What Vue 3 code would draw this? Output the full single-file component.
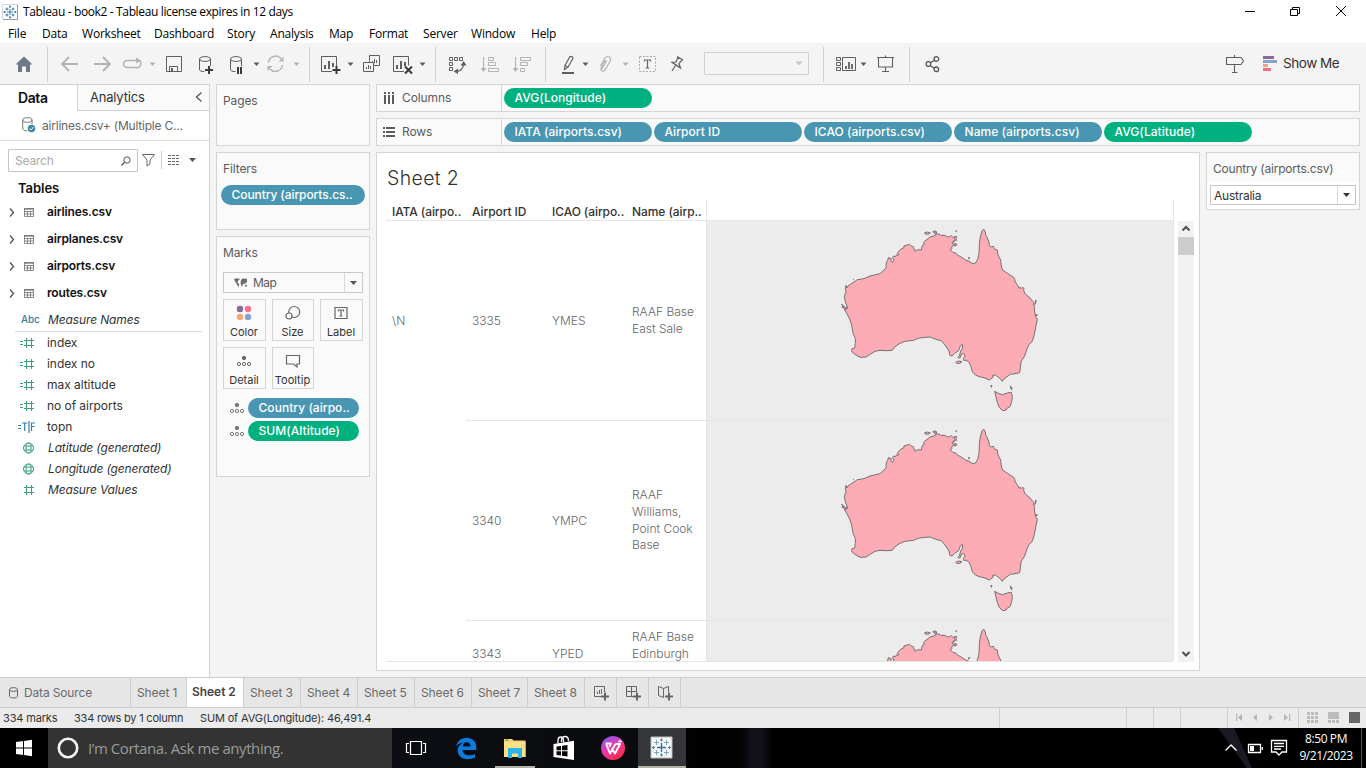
<script setup>
const D = '#5f5f5f'
const G = '#b3b3b3'
const caret = (x, y, c = D) => `<path d="M${x - 3} ${y - 1.5}h6l-3 3.5z" fill="${c}"/>`
const plus = (x, y, c = '#3a3a3a') => `<path d="M${x - 4} ${y}h8M${x} ${y - 4}v8" stroke="${c}" stroke-width="2"/>`
const line = (d, c = D, w = 1) => `<path d="${d}" fill="none" stroke="${c}" stroke-width="${w}"/>`
const cyl = (x) =>
  line(`M${x} 59v11q.5 1.500 5 1.700M${x + 11} 59v7M${x} 59a5.500 2.400 0 0 1 11 0a5.500 2.400 0 0 1 -11 0z`)

const tools = [
  { x: 0, w: 47, d: `<path d="M24 56.500l8.500 8h-2.500v7.500h-4v-5.500h-4v5.500h-4v-7.500h-2.500z" fill="#6c7887"/>` },
  { sep: true },
  { x: 48, w: 40, d: line('M78 64H63M69 57l-7 7 7 7', G, 1.8) },
  { x: 88, w: 30, d: line('M94 64H109M103 57l7 7 -7 7', G, 1.8) },
  { x: 118, w: 42, d: line('M139 60.500q2.500 1 1.500 4.500t-4 2.500H127.500q-4 -.5 -4 -3.500t4 -3.500H137', G, 1.4) + `<path d="M136 57.500l5 3 -5 3z" fill="${G}"/>` + caret(152.5, 64, G) },
  { x: 160, w: 30, d: line('M166.500 56.500h15v15h-15zM169.500 71.500v-5h8v5') + `<path d="M171 68h2v3h-2z" fill="${D}"/>` },
  { x: 190, w: 32, d: cyl(199.5) + plus(209, 70) },
  { x: 222, w: 43, d: cyl(230.5) + `<path d="M237 67h2v7h-2zM240 67h2v7h-2z" fill="#3a3a3a"/>` + caret(256.5, 64) },
  { x: 265, w: 44, d: line('M268.500 62.500a7.200 7.200 0 0 1 12.500 -4M282.500 65a7.200 7.200 0 0 1 -12.500 4', G, 1.4) + `<path d="M278.500 61.500h5v-5zM272.500 66h-5v5z" fill="${G}"/>` + caret(296.500, 64, G) },
  { sep: true },
  { x: 310, w: 50, d: line('M332 71.500h-10.500v-15h15v9.500') + line('M325 69v-4M329 69v-8M333 67v-4', D, 2) + plus(336.500, 70) + caret(350.5, 64) },
  { x: 360, w: 26, d: line('M369.500 60.500v-5h10v10h-6M373.500 71.500h-10v-9h10zM369.500 60.500v2') + line('M372.500 63v-2M374.500 63v-4M376.500 63v-3M366.500 69v-2M368.500 69v-4M370.500 69v-3') },
  { x: 386, w: 49, d: line('M404 71.500h-10.500v-15h15v9') + line('M397 69v-4M401 69v-8M405 66v-4', D, 2) + line('M405 66.500l7 7M412 66.500l-7 7', '#3a3a3a', 2) + caret(422.5, 64) },
  { sep: true },
  { x: 436, w: 36, d: line('M449.500 57.500h3v3h-3zM454.500 57.500h3v3h-3zM459.500 57.500h3v3h-3zM449.500 62.500h3v3h-3zM449.500 67.500h3v3h-3z') + line('M463.500 64q-.5 6.500 -7 7.500', D, 1.3) + `<path d="M460.500 65.500l3.200 -4.500 2.800 4.500zM458 68.500l-4.500 3 4.500 2.500z" fill="${D}"/>` },
  { x: 472, w: 34, d: line('M483.500 57v13', G, 1.2) + `<path d="M480.500 68h6l-3 4z" fill="${G}"/>` + line('M488.500 57.500h5v3h-5zM488.500 62.500h7v3h-7zM488.500 68.500h10v3h-10z', G) },
  { x: 506, w: 39, d: line('M515.500 57v13', G, 1.2) + `<path d="M512.500 68h6l-3 4z" fill="${G}"/>` + line('M520.500 57.500h10v3h-10zM520.500 62.500h7v3h-7zM520.500 68.500h4v3h-4z', G) },
  { sep: true },
  { x: 546, w: 46, d: line('M564.500 69.500l.5 -4 5 -9q2.500 -.5 3 1.700l-5 9zM565 65.500l3.500 2', D, 1.2) + `<path d="M562 72h12v2h-12z" fill="${D}"/>` + caret(585.500, 64) },
  { x: 592, w: 42, d: line('M602 69l4.500 -8.500M600.500 66l4 -7.500q2.500 -3 5 -1.500 1.800 1.500 .5 4.500l-5 8.500q-1.500 1.800 -3.300 .8 -1.500 -1.200 -.5 -3.300l4.300 -7.500', G, 1.2) + caret(625.500, 64, G) },
  { x: 634, w: 28, d: '<path d="M639.500 56.500h16v15h-16z" fill="none" stroke="#aaa" stroke-dasharray="2 1.500"/>' + line('M644.500 61.500v-1.500h6v1.500M647.500 60v8M645.500 68h4', '#666', 1.2) },
  { x: 662, w: 42, d: line('M677 56.500l6 3.500M678 57.500l-2 4.500 -4 .5 8.500 5.500 -1.500 -4.500 3 -3.700M671.500 62l9.500 6M675.500 65.500l-3.500 5.500', D, 1.2) },
  { combo: true },
  { gap: 14 },
  { sep: true },
  { x: 824, w: 44, d: line('M836.500 57.500h4v3h-4zM836.500 62.500h4v3h-4zM836.500 67.500h4v3h-4zM842.500 57.500h13v13h-13z') + line('M846 69v-3M849 69v-7M852 69v-5', D, 1.8) + caret(863.500, 64) },
  { x: 868, w: 41, d: line('M877 57.500h17M878.500 57.500v9.500h14v-9.500M885.500 67v5M882 71.500h7M885.500 55.500v2', D, 1.1) },
  { sep: true },
  { x: 910, w: 310, d: line('M930 63l4 -2.500M930 65.500l4 2.500M930.700 64a2.300 2.300 0 1 1 -4.600 0a2.300 2.300 0 1 1 4.600 0zM938.700 59a2.300 2.300 0 1 1 -4.600 0a2.300 2.300 0 1 1 4.600 0zM938.700 69.300a2.300 2.300 0 1 1 -4.600 0a2.300 2.300 0 1 1 4.600 0z', '#555', 1.3) },
  { x: 1220, w: 43, d: line('M1226.500 57.500h14.500l2.500 3.500 -2.500 3.500h-14.500zM1234.500 55v2.500M1234.500 64.500v8M1232 72.500h5.500', D, 1.1) },
  { x: 1263, w: 20, d: '<path d="M1263 56h11v3h-11z" fill="#8b6d98"/><path d="M1263 60h14v3h-14z" fill="#84a3cf"/><path d="M1263 64h5v3h-5z" fill="#f3a57e"/><path d="M1263 68h8v3h-8z" fill="#f76f84"/>' }
]

const menus = [['File', 34], ['Data', 40], ['Worksheet', 72], ['Dashboard', 73], ['Story', 43], ['Analysis', 59], ['Map', 40], ['Format', 54], ['Server', 48], ['Window', 60], ['Help', 40]]
const tables = ['airlines.csv', 'airplanes.csv', 'airports.csv', 'routes.csv']
const fields = [
  ['calc', 'index'], ['calc', 'index no'], ['calc', 'max altitude'], ['calc', 'no of airports'], ['bool', 'topn'],
  ['geo', 'Latitude (generated)'], ['geo', 'Longitude (generated)'], ['num', 'Measure Values']
]
const rowPills = ['IATA (airports.csv)', 'Airport ID', 'ICAO (airports.csv)', 'Name (airports.csv)']
const sheets = [1, 2, 3, 4, 5, 6, 7, 8]
const rows = [
  { iata: '\\N', id: '3335', icao: 'YMES', name: ['RAAF Base', 'East Sale'] },
  { iata: '', id: '3340', icao: 'YMPC', name: ['RAAF', 'Williams,', 'Point Cook', 'Base'] },
  { iata: '', id: '3343', icao: 'YPED', name: ['RAAF Base', 'Edinburgh'] }
]
const land = 'M318 38L320 43 328 42 332 46 345 46 350 50 360 51 364 46 368 50 372 55 374 49 380 50 378 56 380 61 372 60 373 66 366 66 368 71 372 75 365 80 366 86 360 89 368 97 377 99 382 105 390 109 398 114 406 120 414 122 426 130 436 130 443 118 447 100 448 75 450 55 456 33 461 27 466 36 467 44 471 52 477 66 478 77 482 81 490 79 494 88 502 90 504 105 512 120 514 138 518 150 528 157 540 165 551 172 554 178 556 186 563 196 567 205 571 202 573 206 577 202 582 205 581 212 586 222 600 234 607 243 612 248 611 255 614 262 613 270 615 282 618 292 622 298 617 322 612 348 606 365 596 375 590 390 583 410 573 425 571 445 569 458 555 461 541 463 530 471 522 477 517 484 513 479 507 473 500 468 495 463 493 467 487 467 489 472 478 480 462 473 448 470 436 465 427 455 423 440 418 428 408 420 402 422 400 416 405 408 401 400 395 402 390 414 384 413 389 405 392 393 398 384 397 373 391 378 385 393 374 400 366 408 360 407 357 393 345 375 335 363 318 358 300 351 285 352 268 354 250 361 225 364 208 371 195 380 187 391 170 392 150 391 135 394 122 402 108 411 90 412 78 405 65 395 66 386 74 384 76 370 76 355 69 340 65 315 58 295 50 280 42 266 41 261 36 262 39 257 34 253 44 260 48 269 48 262 53 265 46 245 43 230 48 215 46 206 48 196 51 204 54 198 66 190 82 179 102 176 120 168 150 161 162 150 169 142 168 134 170 125 174 120 174 114 178 113 180 117 184 116 183 122 187 127 192 121 188 113 190 108 196 110 200 104 205 106 203 98 213 87 222 83 222 78 238 73 242 77 250 80 255 94 262 89 274 90 277 76 283 74 281 68 288 60 302 50 315 47Z'
const isles = 'M494 514L505 520 518 524 532 519 544 517 547 530 545 545 540 560 533 563 528 570 518 572 508 562 502 548 498 530ZM377 427L385 423 396 425 390 430 380 430ZM284 38L292 36 301 39 294 43 286 42ZM309 34L318 33 320 39 312 39ZM482 497L486 497 484 502ZM541 498L545 502 546 509 542 506ZM414 115L419 112 417 117ZM370 72L379 71 378 78 372 77ZM377 34L380 32 379 35ZM70 178L72 178 71 179ZM618 240L617 250 614 254ZM619 282L622 285 620 288Z'
</script>

<template>
  <div class="screen">
    <header class="titlebar">
      <svg class="logo" width="16" height="16" viewBox="0 0 16 16">
        <path d="M.5 .5h15v15H.5z" fill="#fff" stroke="#d5d5d5" /><path d="M1 15.500h14.500V1" fill="none" stroke="#999" />
        <path d="M8 5v6M5 8h6M5 3.500v3M3.500 5h3M11 3.500v3M9.500 5h3M5 9.500v3M3.500 11h3M11 9.500v3M9.500 11h3M8 1.500v2.500M7 2.500h2M8 12v2.500M7 13.500h2M2.500 7v2M1.500 8H4M13.500 7v2M12 8h2.500" stroke="#3a7fa8" />
      </svg>
      <span class="caption">Tableau - book2 - Tableau license expires in 12 days</span>
      <svg class="winctl" width="126" height="24" viewBox="1240 0 126 24" fill="none" stroke="#000">
        <path d="M1245 10.500h10M1290.500 8.500h7v6h-7zM1292.500 8.500v-2h7v6h-2M1336 5l10 10M1346 5l-10 10" />
      </svg>
    </header>
    <nav class="menubar"><span v-for="m in menus" :key="m[0]" :style="{ width: m[1] + 'px' }">{{ m[0] }}</span></nav>

    <div class="toolbar">
      <template v-for="(t, i) in tools" :key="i">
        <i v-if="t.sep" class="sep"></i>
        <div v-else-if="t.combo" class="combo"><svg width="8" height="6" viewBox="0 0 8 6"><path d="M.5 .5h7l-3.500 4z" fill="#c6c6c6" /></svg></div>
        <i v-else-if="t.gap" :style="{ width: t.gap + 'px' }"></i>
        <svg v-else :width="t.w" height="41" :viewBox="`${t.x} 43 ${t.w} 41`" v-html="t.d"></svg>
      </template>
      <span class="showme">Show Me</span>
    </div>

    <main class="work">
      <aside class="data">
        <div class="dtabs">
          <b>Data</b>
          <div class="atab"><span>Analytics</span><svg width="8" height="10" viewBox="0 0 8 10"><path d="M6.500 .5L1.500 5l5 4.500" fill="none" stroke="#555" stroke-width="1.300" /></svg></div>
        </div>
        <div class="source">
          <svg width="14" height="16" viewBox="0 0 14 16">
            <path d="M.7 3v9q.5 1.800 4.500 2M10 3v4M.7 3a4.650 2.300 0 0 1 9.300 0a4.650 2.300 0 0 1 -9.300 0z" fill="none" stroke="#777" />
            <circle cx="9.500" cy="11.500" r="3.800" fill="#3f86a8" /><path d="M7.500 11.500l1.500 1.500 2.500 -3" fill="none" stroke="#fff" />
          </svg>
          <span>airlines.csv+ (Multiple C...</span>
        </div>
        <div class="searchrow">
          <div class="search"><span>Search</span><svg width="10" height="10" viewBox="0 0 10 10" fill="none" stroke="#555"><circle cx="6" cy="4" r="3.200" /><path d="M3.500 6.300L.5 9.500" stroke-width="1.300" /></svg></div>
          <svg width="70" height="22" viewBox="138 149 70 22">
            <path d="M142.500 154.500h12l-4.500 5.500v4l-3 2v-6z" fill="none" stroke="#666" />
            <path d="M161.500 151v18" stroke="#ccc" />
            <path d="M168 155.500h12M168 158.500h12M168 161.500h12M168 164.500h12" stroke="#666" stroke-dasharray="3 1" />
            <path d="M189 158h7l-3.500 4z" fill="#555" />
          </svg>
        </div>
        <h3>Tables</h3>
        <div v-for="t in tables" :key="t" class="trow">
          <svg width="40" height="14" viewBox="0 0 40 14" fill="none" stroke="#707070">
            <path d="M10 3.500l3.500 4 -3.500 4" stroke="#555" stroke-width="1.300" /><path d="M24.500 3.500h9v8h-9zM24.500 6.500h9M24.500 9h9M27.500 6v5.500M30.500 6v5.500" stroke-width=".8" /><path d="M24 4h10" stroke-width="1.200" />
          </svg><b>{{ t }}</b>
        </div>
        <div class="names"><span class="abc">Abc</span><em>Measure Names</em></div>
        <div v-for="f in fields" :key="f[1]" class="field">
          <svg width="47" height="14" viewBox="0 0 47 14" fill="none" stroke="#3fa07a">
            <path v-if="f[0] === 'calc' || f[0] === 'num'" d="M24 4.500h10M24 9.500h10M26.500 2v10M31.500 2v10" stroke-width="1.100" />
            <path v-if="f[0] === 'calc'" d="M20 5.500h3M20 8.500h3" />
            <path v-if="f[0] === 'bool'" stroke="#3a7ea1" stroke-width="1.200" d="M18 5.500h3M18 8.500h3M22 3h5.500M24.700 3v8M29 1v12M31.500 11V3h3.500M31.500 6.500h3" />
            <path v-if="f[0] === 'geo'" d="M33.500 7a5 5 0 1 1 -10 0a5 5 0 1 1 10 0zM31 7a2.500 5 0 1 1 -5 0a2.500 5 0 1 1 5 0zM24 5h9M24 9h9" />
          </svg>
          <em v-if="f[0] === 'geo' || f[0] === 'num'">{{ f[1] }}</em><span v-else>{{ f[1] }}</span>
        </div>
      </aside>

      <section class="cards">
        <div class="card pages"><h4>Pages</h4></div>
        <div class="card filters"><h4>Filters</h4><div class="pill blue">Country (airports.cs..</div></div>
        <div class="card marks">
          <h4>Marks</h4>
          <div class="marktype">
            <svg width="14" height="10" viewBox="0 0 14 10" fill="#6e6e6e"><path d="M0 1l3 -.7 3 .7 -2 2 -.5 1.500 1.800 1.500 -1 3.500 -1.500 -3.500L1 3.500zM7 2l1.500 -1.500L13 .8l0 3.500 -1.500 .5 0 1.700 -1.500 -1 -1 .5 -1 3 -1.500 -3.500zM11 7h2v1.500h-2z" /></svg>
            <span>Map</span><i><svg width="7" height="4" viewBox="0 0 7 4"><path d="M0 0h7L3.500 4z" fill="#555" /></svg></i>
          </div>
          <div class="btns">
            <div><svg width="18" height="18" viewBox="0 0 18 18"><circle cx="5" cy="5" r="3" /><circle cx="5" cy="5" r="3.200" fill="#8b6d98" /><circle cx="13" cy="5" r="3.200" fill="#fc7188" /><circle cx="5" cy="13" r="3.200" fill="#f5a879" /><circle cx="13" cy="13" r="3.200" fill="#84a3cf" /></svg>Color</div>
            <div><svg width="18" height="18" viewBox="0 0 18 18" fill="#fafafa" stroke="#666" stroke-width="1.200"><circle cx="10.200" cy="8" r="5.500" /><circle cx="5" cy="12" r="3" /></svg>Size</div>
            <div><svg width="18" height="18" viewBox="0 0 18 18" fill="none" stroke="#666" stroke-width="1.200"><path d="M3 3.500h12v11H3zM6.500 7.500V6h5v1.500M9 6v6M7.500 12h3" /></svg>Label</div>
            <div><svg width="18" height="18" viewBox="0 0 18 18" fill="none" stroke="#666"><circle cx="9" cy="6" r="1.700" fill="#666" /><circle cx="4" cy="12" r="1.600" /><circle cx="9" cy="12" r="1.600" /><circle cx="14" cy="12" r="1.600" /></svg>Detail</div>
            <div><svg width="18" height="18" viewBox="0 0 18 18" fill="none" stroke="#666" stroke-width="1.200"><path d="M2.500 3.500h13v8.500h-2.500v3l-3.500 -3H2.500z" /></svg>Tooltip</div>
          </div>
          <div v-for="p in [['blue', 'Country (airpo..'], ['green', 'SUM(Altitude)']]" :key="p[1]" class="enc">
            <svg width="18" height="18" viewBox="0 0 18 18" fill="none" stroke="#777"><circle cx="9" cy="6" r="1.700" fill="#777" /><circle cx="4" cy="12" r="1.600" /><circle cx="9" cy="12" r="1.600" /><circle cx="14" cy="12" r="1.600" /></svg>
            <div class="pill" :class="p[0]">{{ p[1] }}</div>
          </div>
        </div>
      </section>

      <section class="canvas">
        <div class="shelf">
          <div class="shname"><svg width="12" height="12" viewBox="0 0 12 12" fill="#5c5c5c"><path d="M1 0h2v2H1zM5 0h2v2H5zM9 0h2v2H9zM1 3h2v9H1zM5 3h2v9H5zM9 3h2v9H9z" /></svg>Columns</div>
          <div class="pill green">AVG(Longitude)</div>
        </div>
        <div class="shelf">
          <div class="shname"><svg width="12" height="12" viewBox="0 0 12 12" fill="#5c5c5c"><path d="M0 1h2v2H0zM0 5h2v2H0zM0 9h2v2H0zM3 1h9v2H3zM3 5h9v2H3zM3 9h9v2H3z" /></svg>Rows</div>
          <div v-for="p in rowPills" :key="p" class="pill blue">{{ p }}</div>
          <div class="pill green">AVG(Latitude)</div>
        </div>
        <div class="lower">
          <div class="view">
            <h1>Sheet 2</h1>
            <div class="viz">
              <div class="sheet">
                <div class="thead"><span>IATA (airpo..</span><span>Airport ID</span><span>ICAO (airpo..</span><span>Name (airp..</span><i></i></div>
                <div class="tbody">
                  <div v-for="r in rows" :key="r.id" class="row">
                    <div class="cell first">{{ r.iata }}</div>
                    <div class="rest">
                      <div class="cell">{{ r.id }}</div><div class="cell">{{ r.icao }}</div>
                      <div class="cell name"><span v-for="n in r.name" :key="n">{{ n }}</span></div>
                      <div class="map">
                        <svg width="220" height="200" viewBox="0 0 660 600" fill="#fdabb5" stroke="#777071" stroke-width="3" stroke-linejoin="round"><path :d="land" /><path :d="isles" /></svg>
                      </div>
                    </div>
                  </div>
                </div>
              </div>
              <div class="scroll">
                <svg width="16" height="16" viewBox="0 0 16 16"><path d="M4.500 9.500L8 6l3.500 3.500" fill="none" stroke="#505050" stroke-width="2" /></svg>
                <i></i>
                <svg width="16" height="16" viewBox="0 0 16 16"><path d="M4.500 6L8 9.500 11.500 6" fill="none" stroke="#505050" stroke-width="2" /></svg>
              </div>
            </div>
          </div>
          <div class="fcard">
            <h4>Country (airports.csv)</h4>
            <div class="sel"><span>Australia</span><i><svg width="7" height="4" viewBox="0 0 7 4"><path d="M0 0h7L3.500 4z" fill="#333" /></svg></i></div>
          </div>
        </div>
      </section>
    </main>

    <div class="tabs">
      <div class="ds"><svg width="9" height="12" viewBox="0 0 9 12" fill="none" stroke="#666"><path d="M.5 2.500v7q0 1.500 4 1.500t4 -1.500v-7a4 1.900 0 0 0 -8 0a4 1.900 0 0 0 8 0" /></svg>Data Source</div>
      <div v-for="s in sheets" :key="s" class="tab" :class="{ on: s === 2, slim: s === 1 || s === 7 }">Sheet {{ s }}</div>
      <div class="new"><svg width="16" height="16" viewBox="0 0 16 16" fill="none" stroke="#666"><path d="M8 11.500H1.500v-10h10V7M4.500 9V6.500M6.500 9V5M8.500 9V4" /><path d="M8 11.500h8M12 7.500v8" stroke-width="2" /></svg></div>
      <div class="new"><svg width="16" height="16" viewBox="0 0 16 16" fill="none" stroke="#666"><path d="M8 11.500H1.500v-10h10V7M6.500 1.500v10M1.500 6.500h10" /><path d="M8 11.500h8M12 7.500v8" stroke-width="2" /></svg></div>
      <div class="new"><svg width="16" height="16" viewBox="0 0 16 16" fill="none" stroke="#666"><path d="M6.500 12.500L1.500 10.500v-9l5 2 5 -2V7M6.500 3.500v9" /><path d="M8 11.500h8M12 7.500v8" stroke-width="2" /></svg></div>
    </div>

    <div class="status">
      <span class="s1">334 marks</span><span class="s2">334 rows by 1 column</span><span class="s3">SUM of AVG(Longitude): 46,491.4</span>
      <svg width="367" height="20" viewBox="999 708 367 20">
        <path d="M999.500 708v20M1126.500 708v20M1153.500 708v20M1180.500 708v20M1227.500 708v20M1298.500 708v20" stroke="#cfcfcf" />
        <path d="M1236 714h1.200v7H1236zM1242 714v7l-4 -3.500zM1257 714v7l-4 -3.500zM1269 714v7l4 -3.500zM1284 714v7l4 -3.500zM1289 714h1.200v7H1289z" fill="#b5b5b5" />
        <path d="M1307 712h3v3h-3zM1311 712h3v3h-3zM1315 712h3v3h-3zM1307 716h3v3h-3zM1311 716h3v3h-3zM1315 716h3v3h-3zM1307 720h3v3h-3zM1311 720h3v3h-3zM1315 720h3v3h-3zM1328 712h11v7h-11zM1328 720h3v3h-3zM1332 720h3v3h-3zM1336 720h3v3h-3z" fill="#bcbcbc" />
        <path d="M1349 712h11v11h-11z" fill="#666" />
      </svg>
    </div>

    <footer class="taskbar">
      <svg width="48" height="40" viewBox="0 728 48 40"><path d="M16 742l7 -1v6.500h-7zM24 740.900l8 -1.100v7.700h-8zM16 748.500h7v6.500l-7 -1zM24 748.500h8v7.700l-8 -1.100z" fill="#fff" /></svg>
      <div class="cortana"><svg width="22" height="22" viewBox="0 0 22 22"><circle cx="11" cy="11" r="9.200" fill="none" stroke="#f4f4f4" stroke-width="2.600" /></svg><span>I’m Cortana. Ask me anything.</span></div>
      <svg width="48" height="40" viewBox="392 728 48 40" fill="none" stroke="#fff" stroke-width="1.200"><path d="M410.500 741.500h11v13h-11zM409 743.500h-2.500v9h2.500M423 743.500h2.500v9h-2.500" /></svg>
      <svg width="50" height="40" viewBox="440 728 50 40"><path d="M456 746.500C457.500 741 461.500 737.700 467 737.700C473 738 476.300 742 476.300 747.500V750H462.500C463 754 466 755.300 469 755.300C471.500 755.300 473.500 754.600 475 753.700V757.600C473 758.700 470.500 759.200 468 759.200C461 759.200 457.700 755 457.700 750.500C457.700 747 460 744 463.500 742.500C460 742.800 457.700 744.500 456 746.500ZM462.700 746.500H470.500C470.500 744 469 742.200 466.700 742.200C464.300 742.200 462.900 744.300 462.700 746.500Z" fill="#0b7bdc" fill-rule="evenodd" /></svg>
      <svg width="50" height="40" viewBox="490 728 50 40"><path d="M504 739h8l1.500 1.500H525.500V757H504z" fill="#f9d36b" /><path d="M504 742h21.500v15H504z" fill="#fbe08a" /><path d="M508 758v-10h14v10h-4v-4.500h-6v4.500z" fill="#2cb5ea" /><path d="M505.500 739.500h2.500v1.500h-2.500z" fill="#48b34f" /><path d="M495 766h40v2h-40z" fill="#b2b2a8" /></svg>
      <svg width="48" height="40" viewBox="540 728 48 40"><path d="M553.500 744L574 740.800V760L553.500 757z" fill="#fff" /><path d="M558 743.500V740.500Q558 737 561 737Q563 737 563.500 740V742.500M561.500 742V739.500Q562 736.500 565 736.500Q568.500 736.500 568.500 741" fill="none" stroke="#fff" stroke-width="1.300" /><path d="M556.500 746.500l4.500 -.6v4.300h-4.500zM562 745.800l5.500 -.8v5.200H562zM556.500 751.200h4.500v4.300l-4.500 -.6zM562 751.200h5.500v5.200l-5.500 -.7z" fill="#050505" /></svg>
      <svg width="50" height="40" viewBox="588 728 50 40">
        <defs><linearGradient id="wps" x1="0" y1="0" x2=".6" y2="1"><stop offset="0" stop-color="#6e5cff" /><stop offset=".5" stop-color="#e33bb0" /><stop offset="1" stop-color="#ff2a4d" /></linearGradient></defs>
        <circle cx="613" cy="748" r="12" fill="url(#wps)" />
        <path d="M605.500 743.500h5.500l-1.500 3.500M606 743.500l4 10 5.500 -9.500M611.500 748.500l3.500 5 5 -9.500h-4.500" fill="none" stroke="#fff" stroke-width="1.900" stroke-linejoin="round" /><path d="M620 739.500v4M618 741.500h4" stroke="#fff" />
      </svg>
      <svg class="active" width="48" height="40" viewBox="638 728 48 40"><path d="M651 737h21v21h-21z" fill="#f7f7f7" stroke="#bbb" /><path d="M661.500 743v9M657 747.500h9" stroke="#33769c" stroke-width="1.400" /><path d="M656.500 740v5M654 742.500h5M666.500 740v5M664 742.500h5M656.500 750v5M654 752.500h5M664 752.500h5M666.500 750v5" stroke="#7ba6bf" /><path d="M661.500 738.500v3M660 740h3M661.500 753.500v3M660 755h3M653.500 746v3M652 747.500h3M669.500 746v3M668 747.500h3" stroke="#4383a6" /><path d="M638 766h48v2h-48z" fill="#b2b2a8" /></svg>
      <i class="fill"></i>
      <svg width="80" height="40" viewBox="1216 728 80 40" fill="none" stroke="#fff" stroke-width="1.300"><path d="M1218 728h16l18 40h-5z" fill="#1d1924" stroke="none" /><path d="M1225.500 750.500l5.500 -5.500 5.500 5.500M1248.500 744.500h12v8h-12zM1262.300 747v3" /><path d="M1250 746h4v5h-4z" fill="#fff" stroke="none" /><path d="M1271.500 740.500h15v11.500h-4.500l-3 3 -3 -3h-4.500zM1274 743.500h10M1274 746.300h10M1274 749h7" /></svg>
      <div class="clock"><span>8:50 PM</span><span>9/21/2023</span></div><i class="peek"></i>
    </footer>
  </div>
</template>

<style>
body { overflow: hidden; }
</style>

<style scoped>
.screen { width: 1366px; height: 768px; display: flex; flex-direction: column; overflow: hidden; background: #f4f4f4; font-family: Inter, "Open Sans", sans-serif; font-size: 12px; color: #333; }
.screen * { box-sizing: border-box; white-space: nowrap; }
svg { flex: none; display: block; }
h1, h3, h4 { margin: 0; font-weight: 400; }
.titlebar, .menubar { background: #fff; font-family: "Open Sans", sans-serif; color: #000; display: flex; align-items: center; flex: none; }
.titlebar { height: 24px; padding: 0 0 1px 2px; }
.caption { margin-left: 5px; font-size: 12px; letter-spacing: -.36px; }
.winctl { margin-left: auto; position: relative; top: 1px; }
.menubar { height: 19px; padding-left: 8px; font-size: 12px; letter-spacing: -.2px; }
.toolbar { height: 41px; display: flex; flex: none; }
.sep { width: 1px; height: 35px; margin-top: 4px; background: #d0d0d0; }
.combo { width: 105px; height: 23px; margin-top: 9px; border: 1px solid #d0d0d0; border-radius: 1px; display: flex; align-items: center; justify-content: flex-end; padding-right: 5px; }
.showme { line-height: 41px; font-size: 13.500px; letter-spacing: -.45px; }
.work { display: flex; height: 593px; flex: none; }
.data { width: 210px; background: #fff; border: solid #d2d2d2; border-width: 1px 1px 0 0; }
.dtabs { display: flex; height: 26px; color: #333; font-size: 14px; }
.dtabs b { width: 77px; padding-left: 18px; line-height: 25px; font-weight: 600; color: #111; letter-spacing: -.4px; }
.atab { flex: 1; border: solid #d2d2d2; border-width: 0 0 1px 1px; background: #fafafa; display: flex; align-items: center; justify-content: space-between; padding: 0 6px 1px 12px; font-size: 13px; letter-spacing: -.2px; }
.source { height: 30px; border-bottom: 1px solid #dedede; display: flex; align-items: center; padding: 0 0 1px 22px; color: #666; font-size: 12px; gap: 6px; letter-spacing: -.22px; }
.searchrow { display: flex; padding: 8px 0 0 8px; }
.search { width: 130px; height: 23px; border: 1px solid #c6c6c6; border-radius: 1px; display: flex; align-items: center; justify-content: space-between; padding: 0 6px; color: #aaa; letter-spacing: -.2px; }
h3 { font-size: 13px; font-weight: 600; color: #111; height: 23px; line-height: 26px; margin: 3px 0 0 18px; letter-spacing: -.05px; }
.trow { height: 27px; display: flex; align-items: center; color: #111; }
.trow b { font-weight: 600; margin-left: 7px; letter-spacing: -.15px; }
.names { height: 25px; margin: 1px 7px 0 15px; border-bottom: 1px solid #dcdcdc; display: flex; align-items: center; letter-spacing: -.12px; }
.abc { width: 33px; padding-left: 6px; font-size: 10px; font-weight: 500; color: #3a7ea1; }
.field { height: 21px; display: flex; align-items: center; letter-spacing: -.05px; }
.field em { padding-left: 1px; letter-spacing: -.15px; }
.cards { width: 154px; margin-left: 6px; display: flex; flex-direction: column; gap: 6px; }
.card, .shelf, .fcard { border: 1px solid #d4d4d4; background: #fafafa; }
h4 { font-size: 12px; color: #5a5a5a; padding-left: 6px; height: 30px; line-height: 31px; letter-spacing: -.12px; }
.pages { height: 62px; }
.filters { height: 78px; }
.marks { height: 241px; }
.pill { height: 20px; line-height: 20px; width: 148px; border-radius: 10px; color: #fff; padding-left: 10.500px; font-weight: 500; margin-right: 2px; overflow: hidden; flex: none; letter-spacing: .05px; }
.blue { background: #4996b2; }
.green { background: #00b180; }
.filters .pill { width: 144px; margin: 2px 0 0 4px; letter-spacing: -.08px; }
.marktype { margin: 5px 6px 0; height: 21px; border: 1px solid #c9c9c9; display: flex; align-items: center; padding-left: 10px; gap: 5px; color: #5a5a5a; letter-spacing: -.5px; }
.marktype i, .sel i { margin-left: auto; width: 18px; height: 100%; border-left: 1px solid #d8d8d8; display: flex; align-items: center; justify-content: center; }
.btns { margin: 6px 6px 0; display: grid; grid-template-columns: 43px 42px 43px; column-gap: 6px; row-gap: 6px; }
.btns div { height: 42px; border: 1px solid #d4d4d4; display: flex; flex-direction: column; align-items: center; justify-content: space-between; padding: 4px 1px 1px 0; font-size: 11px; color: #333; }
.enc { display: flex; align-items: center; height: 20px; margin: 9px 0 -6px 11px; gap: 2px; }
.enc .pill { width: 111px; }
.canvas { width: 984px; margin-left: 6px; display: flex; flex-direction: column; gap: 6px; }
.shelf { height: 28px; display: flex; align-items: center; }
.shname { width: 125px; height: 26px; border-right: 1px solid #d4d4d4; margin-right: 2px; padding: 0 0 1px 6px; display: flex; align-items: center; gap: 7px; color: #5a5a5a; letter-spacing: -.1px; }
.lower { display: flex; gap: 6px; }
.view { width: 824px; height: 519px; border: 1px solid #d4d4d4; background: #fff; padding-left: 9px; }
h1 { font-size: 19.500px; font-weight: 300; height: 47px; line-height: 51px; padding-left: 1px; color: #333; letter-spacing: .35px; }
.viz { display: flex; }
.sheet { width: 788px; height: 462px; border: solid #e6e6e6; border-width: 0 1px 1px 0; }
.thead { height: 21px; display: flex; border-bottom: 1px solid #e6e6e6; font-weight: 500; color: #333; letter-spacing: -.08px; }
.thead span { width: 80px; padding-left: 6px; line-height: 24px; }
.thead i { border-left: 1px solid #e6e6e6; }
.tbody { height: 440px; overflow: hidden; }
.row { display: flex; height: 200px; }
.first { height: 199px; }
.rest { display: flex; width: 707px; border-bottom: 1px solid #e6e6e6; overflow: hidden; }
.cell { width: 80px; padding-left: 6px; color: #666; font-weight: 300; display: flex; align-items: center; }
.name { flex-direction: column; align-items: flex-start; justify-content: center; line-height: 16.600px; }
.row:last-child .cell { height: 65px; }
.row:last-child .name { justify-content: flex-start; padding-top: 8px; }
.map { flex: 1; border-left: 1px solid #e2e2e2; background: #ececec; padding-left: 123px; }
.map svg { margin-top: -1px; }
.scroll { width: 16px; height: 441px; margin: 21px 0 0 4px; background: #f2f2f2; display: flex; flex-direction: column; }
.scroll i { height: 18px; background: #cdcdcd; margin-bottom: auto; }
.fcard { width: 154px; height: 58px; background: #fff; }
.fcard h4 { background: #fafafa; height: 29px; letter-spacing: -.2px; }
.sel { margin: 3px; height: 20px; border: 1px solid #c6c6c6; display: flex; align-items: center; padding-left: 3px; letter-spacing: -.25px; }
.tabs { height: 31px; border: solid #cdcdcd; border-width: 1px 0; background: #e6e6e6; display: flex; flex: none; color: #6a6a6a; }
.tabs > div { border-right: 1px solid #cdcdcd; display: flex; align-items: center; }
.tabs > .ds { width: 131px; padding-left: 9px; gap: 6px; letter-spacing: -.15px; }
.tabs > .tab { width: 57px; padding-left: 6px; letter-spacing: -.1px; }
.tabs > .slim { width: 56px; }
.tabs > .on { background: #fff; font-weight: 600; color: #444; padding: 0 0 2px 5px; letter-spacing: -.05px; }
.tabs > .new { width: 32px; justify-content: center; }
.status { height: 20px; background: #ebebeb; display: flex; align-items: center; font-size: 11px; flex: none; letter-spacing: -.15px; }
.status svg { margin-left: auto; }
.s1 { padding-left: 3px; width: 74px; }
.s2 { width: 126px; letter-spacing: -.22px; }
.taskbar { height: 40px; flex: none; display: flex; background: linear-gradient(90deg, #000 48px, #0c0d12 392px, #0a0b0f 638px, #000 700px, #030306 742px, #14111e 752px, #121019 762px, #010102 772px, #000); font-family: "Open Sans", sans-serif; }
.cortana { width: 344px; background: #333; display: flex; align-items: center; padding-left: 9px; gap: 9px; color: #9b9b9b; font-size: 15px; letter-spacing: -.42px; }
.active { background: #35363a; }
.fill { flex: 1; }
.clock { width: 65px; display: flex; flex-direction: column; align-items: center; color: #fff; font-size: 12px; line-height: 17px; padding: 2px 5px 0 0; letter-spacing: -.4px; }
.peek { width: 5px; border-left: 1px solid #555; }
</style>
